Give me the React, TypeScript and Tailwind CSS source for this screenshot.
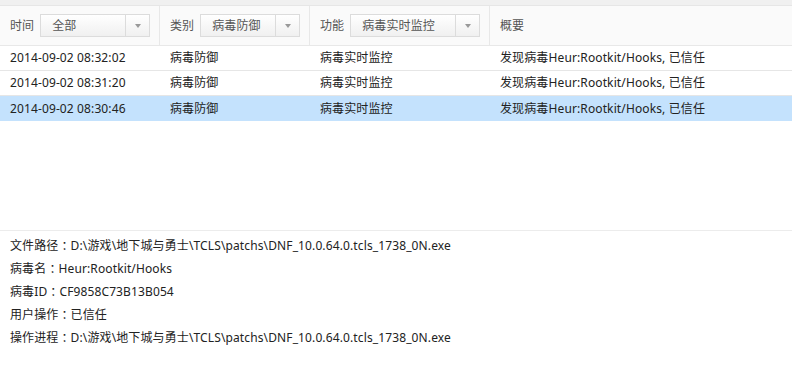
function Dropdown({ value, width }: { value: string; width: string }) {
  return (
    <div
      className={`flex h-[23px] ${width} border border-[#dcdcdc] bg-gradient-to-b from-white to-[#f0f0f0]`}
    >
      <div className="flex-1 pl-[11px] leading-[21px] text-[#555]">{value}</div>
      <div className="flex w-[24px] items-center justify-center border-l border-[#dcdcdc]">
        <div className="h-0 w-0 border-x-[3.5px] border-t-[4px] border-x-transparent border-t-[#999]" />
      </div>
    </div>
  );
}

const rows = [
  { time: "2014-09-02 08:32:02", selected: false },
  { time: "2014-09-02 08:31:20", selected: false },
  { time: "2014-09-02 08:30:46", selected: true },
];

const details = [
  ["文件路径", "D:\\游戏\\地下城与勇士\\TCLS\\patchs\\DNF_10.0.64.0.tcls_1738_0N.exe"],
  ["病毒名", "Heur:Rootkit/Hooks"],
  ["病毒ID", "CF9858C73B13B054"],
  ["用户操作", "已信任"],
  ["操作进程", "D:\\游戏\\地下城与勇士\\TCLS\\patchs\\DNF_10.0.64.0.tcls_1738_0N.exe"],
];

export default function App() {
  return (
    <div
      className="flex h-[369px] w-[792px] flex-col overflow-hidden bg-white text-[12px] tracking-[0.12px]"
      style={{ fontFamily: '"Noto Sans", "Noto Sans CJK SC", sans-serif' }}
    >
      <div className="h-[6px] border-b border-[#e6e6e6] bg-[#f0f0f0]" />

      {/* filter header */}
      <div className="grid h-[40px] grid-cols-[160px_150px_180px_1fr] border-b border-[#e8e8e8] bg-[#fafafa] text-[#555]">
        <div className="flex items-center gap-[6px] border-r border-[#e8e8e8] pl-[10px]">
          <span>时间</span>
          <Dropdown value="全部" width="w-[110px]" />
        </div>
        <div className="flex items-center gap-[6px] border-r border-[#e8e8e8] pl-[10px]">
          <span>类别</span>
          <Dropdown value="病毒防御" width="w-[100px]" />
        </div>
        <div className="flex items-center gap-[6px] border-r border-[#e8e8e8] pl-[10px]">
          <span>功能</span>
          <Dropdown value="病毒实时监控" width="w-[130px]" />
        </div>
        <div className="flex items-center pl-[10px]">概要</div>
      </div>

      {/* log rows */}
      <div className="flex-1 text-[#222]">
        {rows.map((r) => (
          <div
            key={r.time}
            className={`grid h-[25px] grid-cols-[160px_150px_180px_1fr] items-center ${
              r.selected ? "bg-[#c4e2fd]" : "border-b border-[#e6e6e6]"
            }`}
          >
            <div className="pl-[10px]">{r.time}</div>
            <div className="pl-[10px]">病毒防御</div>
            <div className="pl-[10px]">病毒实时监控</div>
            <div className="pl-[10px]">发现病毒Heur:Rootkit/Hooks, 已信任</div>
          </div>
        ))}
      </div>

      {/* details */}
      <div className="h-[139px] border-t border-[#ececec] pt-[3px] pl-[10px] text-[#222]">
        {details.map(([k, v]) => (
          <div key={k} className="flex h-[23px] items-center whitespace-pre">
            <span>{k}</span>
            <span style={{ fontFamily: '"Noto Sans CJK TC", sans-serif' }}>：</span>
            <span>{v}</span>
          </div>
        ))}
      </div>
    </div>
  );
}
